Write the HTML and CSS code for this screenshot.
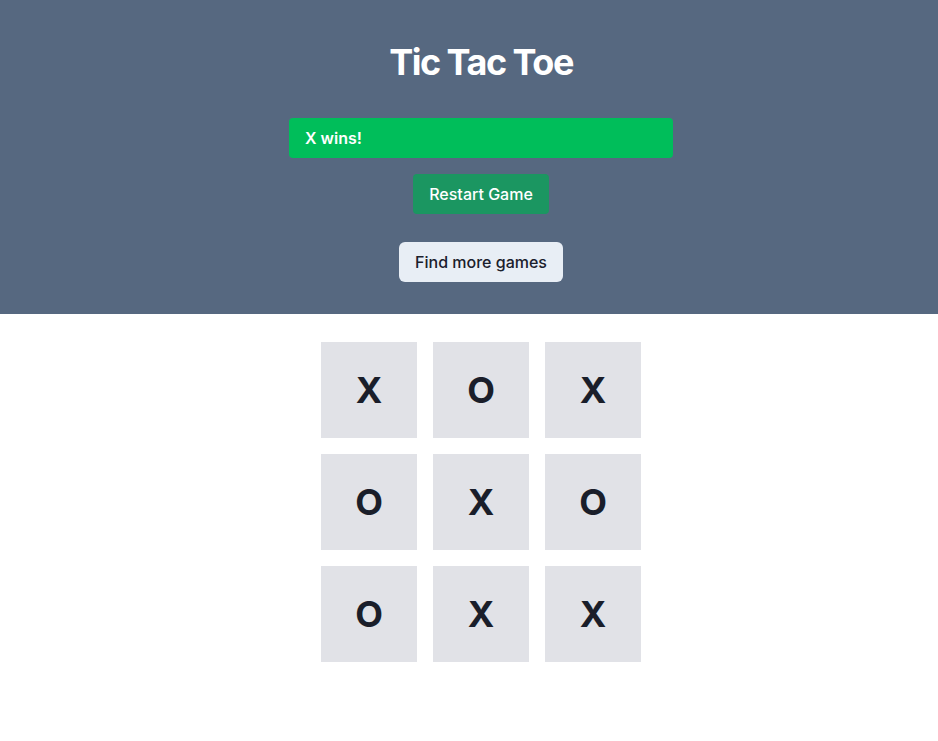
FILE: index.html
```html
<!DOCTYPE html>
<html>
<head>
<meta charset="utf-8">
<link rel="stylesheet" href="styles.css">
</head>
<body>
<header class="top">
  <h1 class="title">Tic Tac Toe</h1>
  <div class="status">X wins!</div>
  <button class="restart">Restart Game</button>
  <button class="more">Find more games</button>
</header>
<main class="board">
  <div class="cell">X</div><div class="cell">O</div><div class="cell">X</div>
  <div class="cell">O</div><div class="cell">X</div><div class="cell">O</div>
  <div class="cell">O</div><div class="cell">X</div><div class="cell">X</div>
</main>
</body>
</html>
```
FILE: styles.css
```css
* { box-sizing: border-box; }
body {
  margin: 0;
  font-family: Inter, "Noto Sans", sans-serif;
  background: #ffffff;
}
.top {
  background: #566880;
  display: flex;
  flex-direction: column;
  align-items: center;
  padding: 42px 0 32px 24px;
}
.title {
  margin: 0;
  font-size: 36px;
  line-height: 40px;
  font-weight: 700;
  letter-spacing: -1.5px;
  color: #ffffff;
}
.status {
  margin-top: 36px;
  width: 384px;
  height: 40px;
  background: #00be5a;
  border-radius: 4px;
  color: #ffffff;
  font-weight: 600;
  font-size: 16px;
  line-height: 40px;
  padding-left: 16px;
}
button {
  font-family: inherit;
  font-size: 16px;
  font-weight: 500;
  border: 0;
  height: 40px;
  padding: 0 16px;
  border-radius: 4px;
}
.restart {
  margin-top: 16px;
  background: #1b9661;
  color: #ffffff;
}
.more {
  margin-top: 28px;
  background: #e8eef5;
  color: #1a202c;
  border-radius: 6px;
}
.board {
  display: grid;
  grid-template-columns: repeat(3, 96px);
  grid-auto-rows: 96px;
  gap: 16px;
  justify-content: center;
  padding: 28px 0 0 24px;
}
.cell {
  background: #e1e2e7;
  display: flex;
  align-items: center;
  justify-content: center;
  font-size: 36px;
  font-weight: 700;
  color: #1a1e2a;
}
```
